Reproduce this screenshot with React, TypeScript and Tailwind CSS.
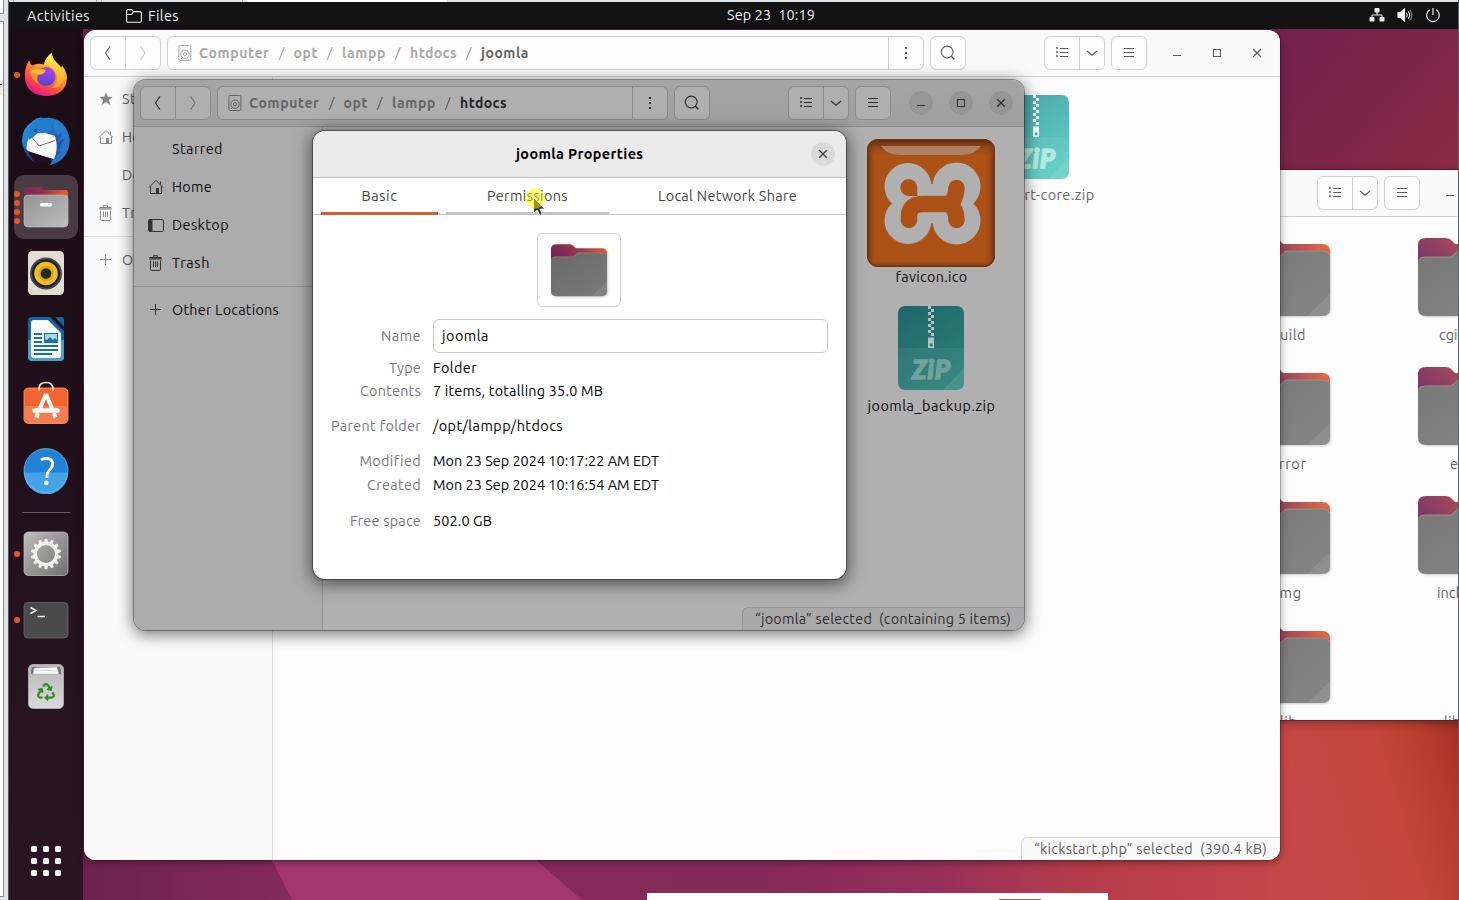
import { useLayoutEffect, useRef, useState, type ReactNode } from "react";
import { FaRecycle } from "react-icons/fa";

/* Text whose letter spacing is adjusted so that it fills the given width. */
function Fit({ w, children, className = "" }: { w: number; children: string; className?: string }) {
  const ref = useRef<HTMLSpanElement>(null);
  const [spacing, setSpacing] = useState(0);
  useLayoutEffect(() => {
    const el = ref.current;
    if (!el) return;
    el.style.letterSpacing = "0px";
    const natural = el.getBoundingClientRect().width;
    const next = (w - natural) / children.length;
    el.style.letterSpacing = `${next}px`;
    setSpacing(next);
  }, [w, children]);
  return (
    <span ref={ref} className={`inline-block shrink-0 whitespace-pre ${className}`} style={{ letterSpacing: `${spacing}px` }}>
      {children}
    </span>
  );
}

type Tone = "light" | "dim";

const line = (t: Tone) => (t === "light" ? "border-[#d0d0d0]" : "border-[#8a8a8a]");
const btn = (t: Tone) => (t === "light" ? "bg-[#fdfdfd] border-[#d0d0d0]" : "bg-[#afafaf] border-[#8a8a8a]");
const ink = (t: Tone) => (t === "light" ? "text-[#5c5c5c]" : "text-[#2c2c2c]");

function Chevron({ flip = false, className = "" }: { flip?: boolean; className?: string }) {
  return (
    <svg width="16" height="16" viewBox="0 0 16 16" fill="none" stroke="currentColor" strokeWidth="1.1" className={className}>
      <path d={flip ? "M5.5 1.2 L10 8 L5.5 14.8" : "M10 1.2 L5.5 8 L10 14.8"} />
    </svg>
  );
}

function DiskIcon() {
  return (
    <svg width="14" height="16" viewBox="0 0 14 16" fill="none" stroke="currentColor">
      <rect x="0.9" y="0.5" width="12" height="15" rx="1.2" />
      <circle cx="7" cy="9.2" r="4.2" />
      <circle cx="7" cy="9.2" r="1.6" />
      <path d="M3 14l2-2" />
    </svg>
  );
}

function SearchIcon() {
  return (
    <svg width="16" height="16" viewBox="0 0 16 16" fill="none" stroke="currentColor" strokeWidth="1.1">
      <circle cx="7.2" cy="7" r="5.9" />
      <path d="M11.3 11.2l3 3" strokeWidth="1.6" />
    </svg>
  );
}

function ListIcon() {
  return (
    <svg width="14" height="14" viewBox="0 0 14 14" fill="none" stroke="currentColor">
      <path d="M1.5 1.5h1v1h-1zM1.5 5.5h1v1h-1zM1.5 9.5h1v1h-1zM5 2.5h8M5 6.5h8M5 10.5h8" />
    </svg>
  );
}

function CloseIcon() {
  return (
    <svg width="10" height="10" viewBox="0 0 10 10" fill="none" stroke="currentColor" strokeWidth="1.3">
      <path d="M1.2 1.2l7.6 7.6M8.8 1.2L1.2 8.8" />
    </svg>
  );
}

function ControlButton({ tone, children }: { tone: Tone; children: ReactNode }) {
  return (
    <div className={`flex size-6 items-center justify-center rounded-full ${tone === "dim" ? "bg-[#969696]" : ""}`}>{children}</div>
  );
}

type Crumb = { name: string; w: number };

function HeaderBar({ tone, crumbs }: { tone: Tone; crumbs: Crumb[] }) {
  return (
    <div
      className={`flex h-[47px] shrink-0 items-center border-b pl-[6px] pr-[11px] ${line(tone)} ${ink(tone)} ${
        tone === "light" ? "bg-[#fafafa]" : "bg-linear-to-b from-[#a4a4a4] to-[#9f9f9f]"
      }`}
    >
      <div className={`mr-[6px] flex h-[34px] w-[71px] shrink-0 rounded-[6px] border ${btn(tone)}`}>
        <div className={`flex w-[35px] items-center justify-center border-r ${line(tone)}`}>
          <Chevron />
        </div>
        <div className="flex flex-1 items-center justify-center">
          <Chevron flip className={tone === "light" ? "opacity-35" : "opacity-50"} />
        </div>
      </div>
      <div className={`mr-[6px] flex h-[34px] min-w-0 flex-1 rounded-[6px] border ${btn(tone)} ${tone === "dim" ? "bg-[#a9a9a9]" : ""}`}>
        <div className={`flex min-w-0 flex-1 items-center overflow-hidden pl-[10px] text-[14px] font-bold ${tone === "light" ? "text-[#aaaaaa]" : "text-[#656565]"}`}>
          {crumbs.length > 0 && <DiskIcon />}
          {crumbs.map((c, i) => (
            <span key={c.name} className="flex items-center">
              {i > 0 && (
                <svg width="24" height="16" viewBox="0 0 24 16" fill="none" stroke="currentColor" strokeWidth="1.3">
                  <path d="M14.3 2L9.3 14.8" />
                </svg>
              )}
              <Fit
                w={c.w}
                className={`${i === 0 ? "ml-[7px]" : ""} ${
                  i === crumbs.length - 1 ? (tone === "light" ? "text-[#666666]" : "text-[#242424]") : ""
                }`}
              >
                {c.name}
              </Fit>
            </span>
          ))}
        </div>
        <div className={`flex w-[35px] shrink-0 flex-col items-center justify-center gap-[3px] border-l ${line(tone)}`}>
          <i className="size-[2px] bg-current" />
          <i className="size-[2px] bg-current" />
          <i className="size-[2px] bg-current" />
        </div>
      </div>
      <div className={`mr-[78px] flex h-[34px] w-[36px] shrink-0 items-center justify-center rounded-[6px] border ${btn(tone)}`}>
        <SearchIcon />
      </div>
      <div className={`mr-[6px] flex h-[34px] w-[61px] shrink-0 rounded-[6px] border ${btn(tone)}`}>
        <div className={`flex w-[35px] items-center justify-center border-r ${line(tone)}`}>
          <ListIcon />
        </div>
        <div className="flex flex-1 items-center justify-center">
          <svg width="12" height="8" viewBox="0 0 12 8" fill="none" stroke="currentColor" strokeWidth="1.2">
            <path d="M1 2l5 4.3L11 2" />
          </svg>
        </div>
      </div>
      <div className={`mr-[18px] flex h-[34px] w-[36px] shrink-0 flex-col items-center justify-center gap-[3px] rounded-[6px] border pb-px ${btn(tone)}`}>
        <i className="h-px w-[10px] bg-current" />
        <i className="h-px w-[10px] bg-current" />
        <i className="h-px w-[10px] bg-current" />
      </div>
      <div className="flex shrink-0 gap-4">
        <ControlButton tone={tone}>
          <i className="mt-[5px] h-px w-2 bg-current" />
        </ControlButton>
        <ControlButton tone={tone}>
          <i className="size-2 border border-current" />
        </ControlButton>
        <ControlButton tone={tone}>
          <CloseIcon />
        </ControlButton>
      </div>
    </div>
  );
}

function StarIcon() {
  return (
    <svg width="16" height="16" viewBox="0 0 16 16" fill="currentColor">
      <path d="M8 1.2l1.8 4.5 4.9.3-3.8 3.1 1.3 4.8L8 11.2l-4.2 2.7 1.3-4.8L1.3 6l4.9-.3z" />
    </svg>
  );
}

function HomeIcon() {
  return (
    <svg width="16" height="16" viewBox="0 0 16 16" fill="none" stroke="currentColor">
      <path d="M.8 8.6L8 1.4l7.2 7.2M2.5 7.5v7h11v-7M12.5 2.5v3" />
      <path d="M8.5 9.5h2v5h-2z" fill="currentColor" />
    </svg>
  );
}

function DesktopIcon() {
  return (
    <svg width="16" height="16" viewBox="0 0 16 16" fill="none" stroke="currentColor">
      <rect x=".5" y="2.5" width="15" height="12" rx="1.2" />
      <path d="M1 3h3v11H1z" fill="currentColor" />
    </svg>
  );
}

function TrashIcon() {
  return (
    <svg width="16" height="16" viewBox="0 0 16 16" fill="none" stroke="currentColor">
      <path d="M5.5 2V.7h4V2M2.5 5.5v8.7q0 1.3 1.3 1.3h7.4q1.3 0 1.3-1.3V5.5M5.5 6.5v5.5M7.5 6.5v5.5M9.5 6.5v5.5" />
      <path d="M1.5 2.5h12M1.2 3.8h12.6" strokeWidth="1.2" />
    </svg>
  );
}

function PlusIcon() {
  return (
    <svg width="16" height="16" viewBox="0 0 16 16" fill="none" stroke="currentColor">
      <path d="M7.5 2v11M2 7.5h11" />
    </svg>
  );
}

function SideRow({ icon, label, w, tone }: { icon?: ReactNode; label: string; w: number; tone: Tone }) {
  return (
    <div className="flex h-[38px] items-center pl-[14px]">
      <span className={`mr-2 flex size-4 shrink-0 ${tone === "light" ? "text-[#888888]" : "text-[#333333]"}`}>{icon}</span>
      <Fit w={w} className={tone === "light" ? "text-[#666666]" : "text-[#0c0c0c]"}>
        {label}
      </Fit>
    </div>
  );
}

function Sidebar({ tone }: { tone: Tone }) {
  return (
    <div className={`w-[189px] shrink-0 border-r pt-[3px] ${tone === "light" ? "border-[#dfdfdf] bg-[#fafafa]" : "border-[#939393] bg-[#acacac]"}`}>
      <SideRow tone={tone} icon={tone === "light" ? <StarIcon /> : undefined} label="Starred" w={51} />
      <SideRow tone={tone} icon={<HomeIcon />} label="Home" w={40} />
      <SideRow tone={tone} icon={tone === "dim" ? <DesktopIcon /> : undefined} label="Desktop" w={57} />
      <SideRow tone={tone} icon={<TrashIcon />} label="Trash" w={38} />
      <div className={`my-1 border-t ${tone === "light" ? "border-[#dfdfdf]" : "border-[#949494]"}`} />
      <SideRow tone={tone} icon={<PlusIcon />} label="Other Locations" w={107} />
    </div>
  );
}

function FolderIcon({ width, height, faded = false, id }: { width: number; height: number; faded?: boolean; id: string }) {
  return (
    <svg width={width} height={height} viewBox="0 0 84 79" className={`block overflow-visible drop-shadow-[1px_1px_1px_rgba(0,0,0,0.2)] ${faded ? "opacity-90" : ""}`}>
      <defs>
        <linearGradient id={`${id}b`} x1="0" y1="0.3" x2="1" y2="0">
          <stop offset="0" stopColor="#762457" />
          <stop offset=".45" stopColor="#99364a" />
          <stop offset="1" stopColor="#ec6228" />
        </linearGradient>
        <linearGradient id={`${id}f`} x1="0" y1="0" x2="1" y2="1">
          <stop offset="0" stopColor="#6a6a6a" />
          <stop offset="1" stopColor="#797979" />
        </linearGradient>
      </defs>
      <path d="M0 30V7Q0 0 8 0H27Q31 0 33 2L37 6H76Q84 6 84 14V34H0Z" fill={`url(#${id}b)`} />
      <path d="M0 71V25Q0 19 7 19H33L40 13H76Q84 13 84 20V71Q84 78 76 78H8Q0 78 0 71Z" fill={`url(#${id}f)`} />
      <path d="M.6 22Q2 19 7 19H33L40 13H76Q82 13 83.5 17" fill="none" stroke="#98908f" strokeWidth=".8" />
      <path d="M84 56V71Q84 78 76 78H61Z" fill="#fff" opacity=".09" />
    </svg>
  );
}

function ZipIcon({ dim = false, id }: { dim?: boolean; id: string }) {
  const paper = dim ? "#b5c4c2" : "#f3fffd";
  const label = dim ? "#6fa29f" : "#b4e9e2";
  return (
    <svg width="66" height="84" viewBox="0 0 66 84" className="block">
      <defs>
        <linearGradient id={id} x1="0" y1="0" x2=".5" y2="1">
          <stop offset="0" stopColor={dim ? "#1f666a" : "#4ba3a8"} />
          <stop offset="1" stopColor={dim ? "#2c7f78" : "#5dcdc0"} />
        </linearGradient>
      </defs>
      <rect width="66" height="84" rx="7" fill={`url(#${id})`} />
      <path d="M0 42H66V77Q66 84 59 84H7Q0 84 0 77Z" fill="#fff" opacity=".05" />
      <path d="M66 62V77Q66 84 59 84H45Z" fill="#fff" opacity=".1" />
      {[0, 1, 2, 3, 4, 5, 6, 7, 8, 9].map((i) => (
        <rect key={i} x={i % 2 ? 33 : 30} y={i * 3} width="3" height="3" fill={paper} />
      ))}
      <path d="M30 31.5H36V42H30Z" fill={paper} />
      <rect x="31.7" y="37.5" width="2.8" height="2.8" fill={dim ? "#2b7473" : "#4fa9a9"} />
      <text
        x="33"
        y="72.5"
        textAnchor="middle"
        textLength="38"
        fontFamily="Lato, sans-serif"
        fontSize="26"
        fontWeight="900"
        fontStyle="italic"
        fill={label}
        stroke={label}
        strokeWidth="1.4"
      >
        ZiP
      </text>
    </svg>
  );
}

function XamppIcon() {
  return (
    <svg width="128" height="128" viewBox="0 0 128 128" className="block">
      <defs>
        <linearGradient id="xh" x1="0" y1="0" x2="1" y2="0">
          <stop offset="0" stopColor="#6b3312" />
          <stop offset=".08" stopColor="#ad5217" stopOpacity="0" />
          <stop offset=".92" stopColor="#ad5217" stopOpacity="0" />
          <stop offset="1" stopColor="#6b3312" />
        </linearGradient>
        <linearGradient id="xt" x1="0" y1="0" x2="0" y2="1">
          <stop offset="0" stopColor="#552a10" />
          <stop offset=".14" stopColor="#ad5217" stopOpacity="0" />
          <stop offset=".94" stopColor="#ad5217" stopOpacity="0" />
          <stop offset="1" stopColor="#7d3c14" />
        </linearGradient>
      </defs>
      <rect x=".5" y=".5" width="127" height="127" rx="11" fill="#ad5217" />
      <rect x=".5" y=".5" width="127" height="127" rx="11" fill="url(#xh)" />
      <rect x=".5" y=".5" width="127" height="127" rx="11" fill="url(#xt)" stroke="#6f3511" strokeWidth="1.5" />
      <path d="M14 7H114Q108 16 94 16H34Q20 16 14 7Z" fill="#b28a72" opacity=".85" />
      <g fill="#b0b0b0">
        <circle cx="41" cy="47.5" r="23.5" />
        <circle cx="89.5" cy="47.5" r="24" />
        <circle cx="41" cy="81.5" r="23.5" />
        <circle cx="89.5" cy="81.5" r="24" />
        <path d="M41 45H90V84H41Z" />
      </g>
      <g fill="none" stroke="#ad5217" strokeWidth="16.5" strokeLinecap="round" strokeLinejoin="round">
        <path d="M42 81V76Q43 65 56 65H84Q89 58 89.5 49" />
        <path d="M82 65Q89.5 70 89.5 81" />
      </g>
      <path d="M50.3 57V48.5A8.5 8.5 0 1 0 41.5 57Z" fill="#ad5217" />
    </svg>
  );
}

function StatusBar({ tone, w, textW, children }: { tone: Tone; w: string; textW: number; children: string }) {
  return (
    <div
      className={`absolute right-0 bottom-0 flex h-[23px] items-center rounded-tl-[6px] border-t border-l pl-3 ${w} ${
        tone === "light" ? "border-[#d6d6d6] bg-[#fafafa] text-[#5e5e5e]" : "border-[#979797] bg-[#a9a9a9] text-[#2e2e2e]"
      }`}
    >
      <Fit w={textW}>{children}</Fit>
    </div>
  );
}

function JoomlaWindow() {
  return (
    <div className="absolute top-[30px] left-[84px] flex h-[830px] w-[1196px] flex-col overflow-hidden rounded-xl bg-[#fcfcfc] shadow-[0_0_0_1px_rgba(0,0,0,0.2),0_2px_8px_rgba(0,0,0,0.4)]">
      <HeaderBar
        tone="light"
        crumbs={[
          { name: "Computer", w: 70.5 },
          { name: "opt", w: 24.5 },
          { name: "lampp", w: 44 },
          { name: "htdocs", w: 47 },
          { name: "joomla", w: 48 },
        ]}
      />
      <div className="flex min-h-0 flex-1">
        <Sidebar tone="light" />
        <div className="flex flex-1 flex-col items-end pt-[18px] pr-[180px]">
          <div className="flex w-[128px] flex-col items-center">
            <ZipIcon id="zipA" />
            <Fit w={117} className="mt-[5px] leading-[22px] text-[#666666]">
              kickstart-core.zip
            </Fit>
          </div>
        </div>
      </div>
      <StatusBar tone="light" w="w-[259px]" textW={233}>
        “kickstart.php” selected  (390.4 kB)
      </StatusBar>
    </div>
  );
}

function HtdocsWindow() {
  return (
    <div className="absolute top-[80px] left-[134px] h-[550px] w-[890px] rounded-xl shadow-[0_0_0_1px_rgba(0,0,0,0.35),0_3px_15px_2px_rgba(0,0,0,0.5)]">
      <div className="relative flex h-full flex-col overflow-hidden rounded-xl bg-[#b0b0b0]">
        <HeaderBar
          tone="dim"
          crumbs={[
            { name: "Computer", w: 70.5 },
            { name: "opt", w: 24.5 },
            { name: "lampp", w: 44 },
            { name: "htdocs", w: 47 },
          ]}
        />
        <div className="flex min-h-0 flex-1">
          <Sidebar tone="dim" />
          <div className="flex flex-1 flex-col items-end pt-3 pr-[29px]">
            <div className="flex w-[128px] flex-col items-center text-[#0c0c0c]">
              <XamppIcon />
              <Fit w={72} className="-mt-px ml-px leading-[22px]">
                favicon.ico
              </Fit>
              <div className="mt-[18px]">
                <ZipIcon dim id="zipB" />
              </div>
              <Fit w={128} className="mt-[5px] ml-px leading-[22px]">
                joomla_backup.zip
              </Fit>
            </div>
          </div>
        </div>
        <StatusBar tone="dim" w="w-[282px]" textW={256}>
          “joomla” selected  (containing 5 items)
        </StatusBar>
      </div>
    </div>
  );
}

function LamppWindow() {
  const cells = [
    { name: "build", w: 35 },
    { name: "cgi-bin", w: 43 },
    { name: "error", w: 36 },
    { name: "etc", w: 21 },
    { name: "img", w: 27 },
    { name: "include", w: 47 },
    { name: "lib", w: 17 },
    { name: "lib64", w: 33, bare: true },
  ];
  return (
    <div className="absolute top-[170px] left-[1100px] flex h-[550px] w-[453px] flex-col overflow-hidden rounded-xl bg-[#fcfcfc] shadow-[0_0_0_1px_rgba(0,0,0,0.25),0_3px_8px_rgba(0,0,0,0.35)]">
      <HeaderBar tone="light" crumbs={[]} />
      <div className="grid grid-cols-[172px_172px] pt-[21px] pl-[102px] text-[#666666]">
        {cells.map((c) => (
          <div key={c.name} className="flex h-[129px] flex-col items-center">
            <div className="h-[86px]">{!c.bare && <FolderIcon id={c.name} width={84} height={79} faded />}</div>
            <Fit w={c.w} className="ml-px leading-[22px]">
              {c.name}
            </Fit>
          </div>
        ))}
      </div>
    </div>
  );
}

function Row({ label, lw, value, vw, className }: { label: string; lw: number; value: string; vw: number; className: string }) {
  return (
    <div className={`flex leading-6 ${className}`}>
      <div className="mr-3 flex w-[108px] justify-end text-[#787878]">
        <Fit w={lw}>{label}</Fit>
      </div>
      <Fit w={vw}>{value}</Fit>
    </div>
  );
}

function PropertiesDialog() {
  return (
    <div className="absolute top-[131px] left-[313px] flex h-[448px] w-[533px] flex-col overflow-hidden rounded-xl bg-white text-black shadow-[0_0_0_1px_rgba(0,0,0,0.4),0_3px_16px_3px_rgba(0,0,0,0.5)]">
      <div className="flex h-[47px] shrink-0 items-center border-b border-[#c0c0c0] bg-[#ebebeb] pr-[11px] pl-[203px] font-bold">
        <Fit w={127.5}>joomla Properties</Fit>
        <div className="ml-auto flex size-6 items-center justify-center rounded-full bg-[#dadada] text-[#3d3d3d]">
          <CloseIcon />
        </div>
      </div>
      <div className="flex h-[37px] shrink-0 gap-2 border-b border-[#c8c8c8] px-2 text-[#454545]">
        <div className="flex h-[37px] w-[117px] items-center justify-center border-b-3 border-[#d75c2f] pt-[2px]">
          <Fit w={36}>Basic</Fit>
        </div>
        <div className="flex h-[37px] w-[163px] items-center justify-center border-b-3 border-[#c4c4c4] pt-[2px]">
          <Fit w={81}>Permissions</Fit>
        </div>
        <div className="flex h-[37px] w-[221px] items-center justify-center border-b-3 border-transparent pt-[2px]">
          <Fit w={139}>Local Network Share</Fit>
        </div>
      </div>
      <div className="mt-[18px] ml-[224px] flex h-[74px] w-[84px] shrink-0 justify-center rounded-[6px] border border-[#cfcfcf] pt-[10px]">
        <FolderIcon id="dlg" width={56} height={53} />
      </div>
      <div className="mt-3 flex items-center">
        <div className="mr-3 flex w-[108px] justify-end text-[#787878]">
          <Fit w={40}>Name</Fit>
        </div>
        <div className="flex h-[34px] w-[395px] items-center rounded-[6px] border border-[#c8c8c8] pl-2">
          <Fit w={47}>joomla</Fit>
        </div>
      </div>
      <Row className="mt-[3px]" label="Type" lw={32} value="Folder" vw={44} />
      <Row className="-mt-px" label="Contents" lw={61} value="7 items, totalling 35.0 MB" vw={170} />
      <Row className="mt-[11px]" label="Parent folder" lw={90} value="/opt/lampp/htdocs" vw={130} />
      <Row className="mt-[11px]" label="Modified" lw={61} value="Mon 23 Sep 2024 10:17:22 AM EDT" vw={226} />
      <Row className="" label="Created" lw={54} value="Mon 23 Sep 2024 10:16:54 AM EDT" vw={226} />
      <Row className="mt-3" label="Free space" lw={71} value="502.0 GB" vw={59} />
    </div>
  );
}

function Pointer() {
  return (
    <svg className="absolute top-[186px] left-[523px]" width="26" height="32" viewBox="0 0 26 32">
      <path d="M10.5 11.500v16l3.800-3.300 2.500 5.300 2.600-1.200-2.400-5.200h5z" fill="#333" stroke="#eee" strokeWidth="1" />
      <circle cx="12" cy="12.500" r="10.300" fill="#fbf700" opacity=".5" />
    </svg>
  );
}

function Wallpaper() {
  return (
    <svg className="absolute inset-0" width="1459" height="900" viewBox="0 0 1459 900">
      <defs>
        <linearGradient id="wt" gradientUnits="userSpaceOnUse" x1="1280" y1="30" x2="1459" y2="190">
          <stop offset="0" stopColor="#74224c" />
          <stop offset=".5" stopColor="#7c2549" />
          <stop offset="1" stopColor="#8e2a40" />
        </linearGradient>
        <linearGradient id="wb" gradientUnits="userSpaceOnUse" x1="84" y1="0" x2="1280" y2="0">
          <stop offset="0" stopColor="#6c224d" />
          <stop offset=".17" stopColor="#852a5c" />
          <stop offset=".57" stopColor="#85295a" />
          <stop offset=".71" stopColor="#96305a" />
          <stop offset=".83" stopColor="#b43c4a" />
          <stop offset="1" stopColor="#c5464a" />
        </linearGradient>
        <linearGradient id="wr" gradientUnits="userSpaceOnUse" x1="1290" y1="790" x2="1475" y2="735">
          <stop offset="0" stopColor="#c54747" />
          <stop offset=".5" stopColor="#c5453b" />
          <stop offset=".75" stopColor="#b83d30" />
          <stop offset="1" stopColor="#992a1e" />
        </linearGradient>
      </defs>
      <rect width="1459" height="500" fill="url(#wt)" />
      <rect y="500" width="1459" height="400" fill="url(#wb)" />
      <rect x="1270" y="720" width="189" height="180" fill="url(#wr)" />
      <path d="M271 858L292 900H582L534 858Z" fill="#a2376f" />
    </svg>
  );
}

function TopBar() {
  return (
    <div className="absolute top-[2px] left-[9px] grid h-[27px] w-[1449px] grid-cols-3 items-center bg-[#131313] text-[#f0f0f0]">
      <div className="flex items-center pl-[18px]">
        <Fit w={63}>Activities</Fit>
        <svg width="16" height="14" viewBox="0 0 16 14" fill="none" stroke="currentColor" strokeWidth="1.1" className="mr-[6px] ml-9">
          <path d="M.6 11.5V2Q.6.6 2 .6H5.5L7.5 2.6H14Q15.4 2.6 15.4 4V11.8Q15.4 13.3 14 13.3H2Q.6 13.3 .6 11.5M.8 5.5H5.5L7.5 2.8" />
        </svg>
        <Fit w={31}>Files</Fit>
      </div>
      <div className="flex justify-center pb-px pl-[75px]">
        <Fit w={88}>Sep 23  10:19</Fit>
      </div>
      <div className="flex items-center justify-end gap-3 pr-[17px] pb-px">
        <svg width="16" height="14" viewBox="0 0 16 14" fill="currentColor">
          <rect x="5.5" y="0" width="5" height="4.5" rx="1" />
          <rect x=".5" y="9" width="5" height="4.5" rx="1" />
          <rect x="10.5" y="9" width="5" height="4.5" rx="1" />
          <path d="M8 4v3M3 9.5V7H13V9.5" fill="none" stroke="currentColor" />
        </svg>
        <svg width="16" height="14" viewBox="0 0 16 14" fill="none" stroke="currentColor" strokeWidth="1.1">
          <path d="M1 4.5H3.5L7.5 1V13L3.5 9.5H1Z" fill="currentColor" />
          <path d="M9.5 4.8Q11 7 9.5 9.2M11.3 3.2Q14 7 11.3 10.8" />
          <path d="M13 1.8Q16.8 7 13 12.2" opacity=".5" />
        </svg>
        <svg width="16" height="16" viewBox="0 0 16 16" fill="none" stroke="currentColor" strokeWidth="1.2">
          <path d="M8 1V8M4.8 2.8A6.3 6.3 0 1 0 11.2 2.8" />
        </svg>
      </div>
    </div>
  );
}

function FirefoxIcon() {
  return (
    <svg width="44" height="46" viewBox="0 0 44 46">
      <defs>
        <linearGradient id="ff1" x1=".8" y1=".1" x2=".3" y2="1">
          <stop offset="0" stopColor="#fff04a" />
          <stop offset=".4" stopColor="#ff9a2c" />
          <stop offset=".72" stopColor="#ff4747" />
          <stop offset="1" stopColor="#e3118b" />
        </linearGradient>
        <linearGradient id="ff2" x1=".7" y1="0" x2=".4" y2="1">
          <stop offset="0" stopColor="#b53bf4" />
          <stop offset="1" stopColor="#4a4bc7" />
        </linearGradient>
        <linearGradient id="ff3" x1="0" y1="0" x2="0" y2="1">
          <stop offset="0" stopColor="#fff253" />
          <stop offset="1" stopColor="#ff9d2a" />
        </linearGradient>
      </defs>
      <path d="M5 8.5Q6 12 8.5 13.5Q13 10.5 20 12.5Q22 5 27.5 1Q28.5 7 33 11Q36 14 37 16.5L38 13.5Q43 20 43 26Q42 43 22.5 44Q3 43 1 27Q0 16 5 8.5Z" fill="url(#ff1)" />
      <path d="M27.5 1Q21 6 20 13Q30 13 33 22Q35 31 27 36Q37 37 40 26Q41 18 35 13Q29 8 27.5 1Z" fill="url(#ff3)" />
      <circle cx="22" cy="24.5" r="9.5" fill="url(#ff2)" />
      <path d="M6 18Q12 15 22 18Q20 23 14 23Q12 28 15 32Q7 29 6 18Z" fill="#ff9326" />
      <path d="M7 19Q14 16 22 18.5Q19 22 14 22Q10 21 7 19Z" fill="#ffbd3a" />
    </svg>
  );
}

function ThunderbirdIcon() {
  return (
    <svg width="50" height="50" viewBox="0 0 50 50">
      <defs>
        <linearGradient id="tb" x1="0" y1="0" x2="1" y2="1">
          <stop offset="0" stopColor="#2a9fe8" />
          <stop offset=".55" stopColor="#1e63b8" />
          <stop offset="1" stopColor="#2a3f9c" />
        </linearGradient>
      </defs>
      <path d="M1 25Q1 12 12 5Q17 0 22 2Q38 0 45 12Q52 24 46 36Q41 46 29 49L31 44Q22 46 10 40L4 35Q1 30 1 25Z" fill="url(#tb)" />
      <path d="M34 4Q30 13 37 19L41 17L38 25L44 22L37 36L41 35L32 44L29 49Q43 46 47 34Q51 20 43 10Q39 6 34 4Z" fill="#2b86d3" opacity=".7" />
      <path d="M10 17L18 15L34 20Q38 33 33 43L6 36Q4 28 10 17Z" fill="#f8f8f8" />
      <path d="M4 34L31 43Q25 48 15 45.500L17 49Q6 44 4 34Z" fill="#1d1020" />
      <path d="M2 30Q5 42 15 47Q9 42 7 35Z" fill="#2a3f9c" />
      <path d="M8 18L18 30L34 24.500" fill="none" stroke="#666" strokeWidth=".9" />
      <path d="M8 24Q6 9 19 2Q31 3 30 13Q24 18 17 17L12 21Z" fill="#1f7fcd" />
      <circle cx="14.5" cy="14.5" r="1.5" fill="#123c74" />
    </svg>
  );
}

function FilesIcon() {
  return (
    <svg width="46" height="44" viewBox="0 0 46 44">
      <defs>
        <linearGradient id="fi" x1="0" y1="0" x2="1" y2="0">
          <stop offset="0" stopColor="#7c2a58" />
          <stop offset=".4" stopColor="#8c3149" />
          <stop offset="1" stopColor="#f0622b" />
        </linearGradient>
        <linearGradient id="fg" x1="0" y1="0" x2="1" y2="1">
          <stop offset="0" stopColor="#949494" />
          <stop offset="1" stopColor="#bdbdbd" />
        </linearGradient>
      </defs>
      <path d="M1 20V5Q1 2 4 2H18L22 5H42Q45 5 45 8V20Z" fill="url(#fi)" />
      <rect x="1" y="10" width="44" height="32" rx="4" fill="url(#fg)" stroke="#c5c5c5" strokeWidth=".6" />
      <rect x="17" y="18" width="12" height="3.5" rx="1.5" fill="#f7f7f7" />
    </svg>
  );
}

function MusicIcon() {
  return (
    <svg width="38" height="46" viewBox="0 0 38 46">
      <rect x="1" y="1" width="36" height="44" rx="4.5" fill="#e1ddd1" />
      <circle cx="19" cy="23.5" r="16" fill="#44474b" />
      <circle cx="19" cy="23.5" r="14" fill="#202020" />
      <circle cx="19" cy="23.5" r="11.8" fill="#f0bd27" />
      <circle cx="19" cy="23.5" r="7.8" fill="#d9a61d" />
      <circle cx="19" cy="23.5" r="5.3" fill="#262626" />
    </svg>
  );
}

function WriterIcon() {
  return (
    <svg width="38" height="46" viewBox="0 0 38 46">
      <path d="M5 1H23L37 15V41Q37 45 33 45H5Q1 45 1 41V5Q1 1 5 1Z" fill="#11679c" />
      <path d="M1 24H37V41Q37 45 33 45H5Q1 45 1 41Z" fill="#4b9fca" />
      <path d="M7 4H21L34 17V39Q34 42 31 42H7Q4 42 4 39V7Q4 4 7 4Z" fill="#fbfdfe" />
      <path d="M28 1H34Q37 1 37 4V11Z" fill="#15669b" />
      <path d="M7 18H15M7 22H15M7 26H15M7 30H31M7 34H31M7 38H25" stroke="#1d7099" strokeWidth="2" />
      <rect x="17.5" y="17.5" width="13" height="9" fill="#a8dcf5" stroke="#1d7099" strokeWidth="1.2" />
      <path d="M18 26V23L20 24L23 21L26 24L28 22L30 24V26Z" fill="#1d7099" />
    </svg>
  );
}

function SoftwareIcon() {
  return (
    <svg width="46" height="46" viewBox="0 0 46 46" className="-mt-[6px]">
      <rect x="1" y="9" width="44" height="35.5" rx="4.5" fill="#f26430" stroke="#ffa27a" strokeWidth=".8" />
      <path d="M1.5 27H44.5V40Q44.5 44 40.5 44H5.5Q1.5 44 1.5 40Z" fill="#f37e50" />
      <path d="M16 11.5V10Q16 3.5 23 3.5Q30 3.5 30 10V11.500" fill="none" stroke="#f6dccb" strokeWidth="1.7" />
      <g fill="none" stroke="#fff" strokeWidth="4">
        <path d="M23 15L17 29.500M23 15L29 29.500M20.500 17H25.500" />
        <path d="M11.5 31.500H34.500" strokeLinecap="round" strokeWidth="4.500" />
        <path d="M15 34L13.500 38.500M31 34L32.500 38.500" />
      </g>
    </svg>
  );
}

function HelpIcon() {
  return (
    <svg width="46" height="46" viewBox="0 0 46 46">
      <circle cx="23" cy="22.5" r="22" fill="#2083d5" />
      <path d="M1 24.500H45A22 22 0 0 1 1 24.500Z" fill="#44a3e4" />
      <circle cx="23" cy="22.500" r="22" fill="none" stroke="#7cc0ee" strokeWidth=".7" />
      <path d="M18 12Q20 10.500 23.500 10.500Q29.500 10.500 29.500 16Q29.500 19.500 26.500 22Q24 24.500 24 27.500V30" fill="none" stroke="#fff" strokeWidth="2.800" />
      <circle cx="23.300" cy="34.800" r="2.300" fill="#fff" />
    </svg>
  );
}

function SettingsIcon() {
  const teeth = Array.from({ length: 14 }, (_, i) => i * (360 / 14));
  return (
    <svg width="46" height="46" viewBox="0 0 46 46">
      <defs>
        <linearGradient id="sg" x1="0" y1="0" x2="1" y2="1">
          <stop offset="0" stopColor="#bdbdbd" />
          <stop offset="1" stopColor="#707070" />
        </linearGradient>
      </defs>
      <rect x="1" y="1" width="44" height="43.5" rx="4.5" fill="url(#sg)" stroke="#c6c6c6" strokeWidth=".7" />
      <circle cx="23" cy="23" r="10.7" fill="none" stroke="#f4f2ee" strokeWidth="3.4" />
      {teeth.map((a) => (
        <path key={a} d="M21 11.5L21.800 7.800H24.200L25 11.500Z" fill="#f4f2ee" transform={`rotate(${a} 23 23)`} />
      ))}
    </svg>
  );
}

function TerminalIcon() {
  return (
    <svg width="46" height="38" viewBox="0 0 46 38">
      <rect x="1" y="1.500" width="44" height="35.500" rx="4" fill="#4a4a4a" stroke="#696969" strokeWidth=".8" />
      <path d="M7.500 6.500L13 9.500L7.500 12.500" fill="none" stroke="#f4f4f4" strokeWidth="1.500" />
      <path d="M14.500 15.500H22" stroke="#f4f4f4" strokeWidth="1.500" />
    </svg>
  );
}

function BinIcon() {
  return (
    <div className="flex h-[45px] w-9 flex-col items-center rounded-[5px] border border-[#a8a8a8] bg-linear-to-b from-[#b7b7b7] to-[#dadada] pt-px">
      <svg width="32" height="9" viewBox="0 0 32 9">
        <path d="M2 1H30Q31 4 31 8H1Q1 4 2 1Z" fill="#6b6b6b" />
        <path d="M4 2L27 1L29 8H3Z" fill="#fff" stroke="#aaa" strokeWidth=".5" />
        <path d="M4 4L28 5" stroke="#aaa" strokeWidth=".6" />
      </svg>
      <FaRecycle className="mt-2 text-[18px] text-[#2f8b22]" />
    </div>
  );
}

function DockItem({ dots = 0, active = false, children }: { dots?: number; active?: boolean; children: ReactNode }) {
  return (
    <div className="relative flex h-[66px] w-[74px] shrink-0 items-center justify-center">
      <div className={`flex size-16 items-center justify-center rounded-[10px] ${active ? "bg-[#483b43]" : ""}`}>{children}</div>
      <div className="absolute top-0 left-[5px] flex h-full flex-col justify-center gap-[3px]">
        {Array.from({ length: dots }, (_, i) => (
          <i key={i} className="size-[6px] rounded-full bg-[#e4572b]" />
        ))}
      </div>
    </div>
  );
}

function Dock() {
  return (
    <div className="absolute top-[29px] left-[9px] flex h-[871px] w-[74px] flex-col items-center bg-linear-to-b from-[#1a0d16] via-[#21101b] to-[#2a1623] pt-[13px]">
      <DockItem dots={1}>
        <FirefoxIcon />
      </DockItem>
      <DockItem>
        <ThunderbirdIcon />
      </DockItem>
      <DockItem dots={4} active>
        <FilesIcon />
      </DockItem>
      <DockItem>
        <MusicIcon />
      </DockItem>
      <DockItem>
        <WriterIcon />
      </DockItem>
      <DockItem>
        <SoftwareIcon />
      </DockItem>
      <DockItem>
        <HelpIcon />
      </DockItem>
      <div className="my-2 h-px w-12 shrink-0 bg-[#675a62]" />
      <DockItem dots={1}>
        <SettingsIcon />
      </DockItem>
      <DockItem dots={1}>
        <TerminalIcon />
      </DockItem>
      <DockItem>
        <BinIcon />
      </DockItem>
      <div className="mt-[127px] grid grid-cols-3 gap-[6px]">
        {Array.from({ length: 9 }, (_, i) => (
          <i key={i} className="size-[6px] rounded-[1.5px] bg-[#f3f1f2]" />
        ))}
      </div>
    </div>
  );
}

export default function App() {
  return (
    <div className="relative h-[900px] w-[1459px] overflow-hidden bg-[#dfe3e7] font-['Ubuntu','Noto_Sans',sans-serif] text-[14.4px] leading-[22px]">
      <Wallpaper />
      <LamppWindow />
      <TopBar />
      <Dock />
      <JoomlaWindow />
      <HtdocsWindow />
      <PropertiesDialog />
      <Pointer />
      <div className="absolute top-0 left-0 flex h-[2px] w-full bg-[#dfe3e7]">
        <i className="ml-[13px] w-[84px] border-x border-[#a5a8ab]" />
        <i className="ml-1 w-[142px] border-x border-[#a5a8ab]" />
        <i className="ml-1 w-[200px] bg-white" />
      </div>
      <div className="absolute top-0 left-0 flex h-full w-[9px] flex-col border-r border-[#55585b] bg-[#dfe3e7]">
        <i className="h-[14px] w-1 border-r border-b border-[#85888b] bg-white" />
        <i className="mt-[7px] h-[876px] w-1 border-y border-r border-[#85888b] bg-white" />
      </div>
      <div className="absolute top-[84px] left-0 h-[11px] w-[2px] border-t border-[#222222] bg-[#f4ecd0]" />
      <i className="absolute top-0 right-0 h-full w-px bg-[#5d6063]" />
      <div className="absolute top-[893px] left-[647px] flex h-[7px] w-[461px] items-end bg-white">
        <i className="ml-[352px] h-px w-[42px] bg-[#8a6468]" />
      </div>
    </div>
  );
}
